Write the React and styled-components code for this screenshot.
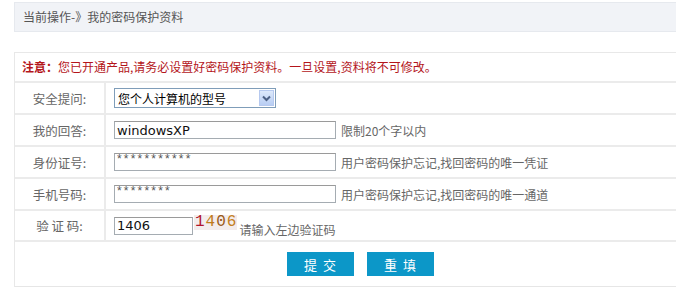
import React from "react";
import styled, { createGlobalStyle } from "styled-components";

const Global = createGlobalStyle`
  html, body { margin: 0; padding: 0; background: #fff; overflow: hidden; }
  body { font-family: "Noto Sans CJK SC", "Liberation Sans", sans-serif; font-size: 12px; }
`;

const Page = styled.div`
  width: 692px;
  padding: 2px 0 0 14px;
`;

const Crumb = styled.div`
  height: 28px;
  line-height: 28px;
  padding-left: 8px;
  background: #f1f3f7;
  border: 1px solid #e6e9ee;
  color: #555;
  font-size: 12px;
`;

const Table = styled.div`
  margin-top: 20px;
  border: 1px solid #e8e8e8;
  border-bottom: none;
`;

const Notice = styled.div`
  height: 28px;
  line-height: 28px;
  padding-left: 7px;
  color: #b4151b;
  font-size: 12px;
  border-bottom: 2px solid #ebebeb;
  b { font-weight: bold; }
`;

const Row = styled.div`
  display: grid;
  grid-template-columns: 91px 1fr;
  height: ${(p) => p.h || 30}px;
  border-bottom: 2px solid #ebebeb;
`;

const Label = styled.div`
  display: flex;
  align-items: center;
  justify-content: center;
  color: #666;
  font-size: 12.5px;
  border-right: 2px solid #ebebeb;
  white-space: pre;
`;

const Field = styled.div`
  display: flex;
  align-items: center;
  padding-left: 8px;
  gap: ${(p) => p.gap ?? 5}px;
`;

const SelectBox = styled.div`
  width: 157px;
  height: 18px;
  border: 1px solid #7f9db9;
  display: flex;
  align-items: center;
  justify-content: space-between;
  font-size: 12px;
  color: #000;
  padding-left: 3px;
  box-sizing: content-box;
  background: #fff;
`;

const DropBtn = styled.div`
  width: 15px;
  height: 16px;
  margin-right: 1px;
  background: linear-gradient(#dde9fb, #b8cdf3);
  border: 1px solid #b6c9ef;
  box-sizing: border-box;
  display: flex;
  align-items: center;
  justify-content: center;
`;

const TextInput = styled.input`
  width: ${(p) => p.w}px;
  height: 18px;
  box-sizing: border-box;
  border: 1px solid #a5acb2;
  border-top-color: #9a9a9a;
  padding: 0 2px;
  margin: 0;
  font-family: ${(p) => (p.top ? '"Liberation Sans", sans-serif' : '"DejaVu Sans", sans-serif')};
  font-size: ${(p) => p.fs || 13}px;
  letter-spacing: ${(p) => (p.top ? "2.2px" : "0")};
  color: ${(p) => (p.top ? "#555" : "#111")};
  outline: none;
  line-height: ${(p) => (p.top ? "8px" : "16px")};
  padding-bottom: ${(p) => (p.top ? "7px" : "0")};
`;

const Hint = styled.span`
  color: #666;
  font-size: 12px;
  padding-top: ${(p) => p.pt || 0}px;
  margin-left: ${(p) => p.ml || 0}px;
`;

const Captcha = styled.span`
  display: inline-flex;
  gap: 1px;
  background: #f3ecec;
  font-family: "Liberation Mono", monospace;
  font-size: 16px;
  line-height: 15px;
  padding: 0 1px;
  margin-left: 1px;
  margin-top: -6px;
`;

const Digit = styled.span`
  color: ${(p) => p.c};
`;

const ButtonRow = styled.div`
  border-bottom: 1px solid #e6e6e6;
  display: flex;
  justify-content: center;
  align-items: flex-start;
  padding-top: 10px;
  gap: 13px;
  box-sizing: border-box;
  height: 45px;
`;

const Btn = styled.button`
  width: 67px;
  height: 24px;
  border: none;
  background: #0c97c8;
  color: #fff;
  font-family: "Noto Sans CJK SC", sans-serif;
  font-size: 13px;
  letter-spacing: 6px;
  padding: 0 0 0 6px;
  margin: 0;
`;

const Chevron = () => (
  <svg width="9" height="7" viewBox="0 0 9 7">
    <path d="M1 1.5 L4.5 5 L8 1.5" fill="none" stroke="#4d6185" strokeWidth="2" />
  </svg>
);

export default function App() {
  return (
    <>
      <Global />
      <Page>
        <Crumb>当前操作-》我的密码保护资料</Crumb>
        <Table>
          <Notice>
            <b>注意：</b>您已开通产品,请务必设置好密码保护资料。一旦设置,资料将不可修改。
          </Notice>
          <Row>
            <Label>安全提问:</Label>
            <Field>
              <SelectBox>
                <span>您个人计算机的型号</span>
                <DropBtn>
                  <Chevron />
                </DropBtn>
              </SelectBox>
            </Field>
          </Row>
          <Row>
            <Label>我的回答:</Label>
            <Field>
              <TextInput w={222} defaultValue="windowsXP" />
              <Hint>限制20个字以内</Hint>
            </Field>
          </Row>
          <Row>
            <Label>身份证号:</Label>
            <Field>
              <TextInput w={222} fs={12} top defaultValue="***********" />
              <Hint>用户密码保护忘记,找回密码的唯一凭证</Hint>
            </Field>
          </Row>
          <Row>
            <Label>手机号码:</Label>
            <Field>
              <TextInput w={222} fs={12} top defaultValue="********" />
              <Hint>用户密码保护忘记,找回密码的唯一通道</Hint>
            </Field>
          </Row>
          <Row h={29}>
            <Label>{"验 证 码:"}</Label>
            <Field gap={0}>
              <TextInput w={79} defaultValue="1406" />
              <Captcha>
                <Digit c="#b0142c">1</Digit>
                <Digit c="#c07a1a">4</Digit>
                <Digit c="#9a5a18">0</Digit>
                <Digit c="#c47f22">6</Digit>
              </Captcha>
              <Hint pt={8} ml={2}>请输入左边验证码</Hint>
            </Field>
          </Row>
          <ButtonRow>
            <Btn>提交</Btn>
            <Btn>重填</Btn>
          </ButtonRow>
        </Table>
      </Page>
    </>
  );
}
